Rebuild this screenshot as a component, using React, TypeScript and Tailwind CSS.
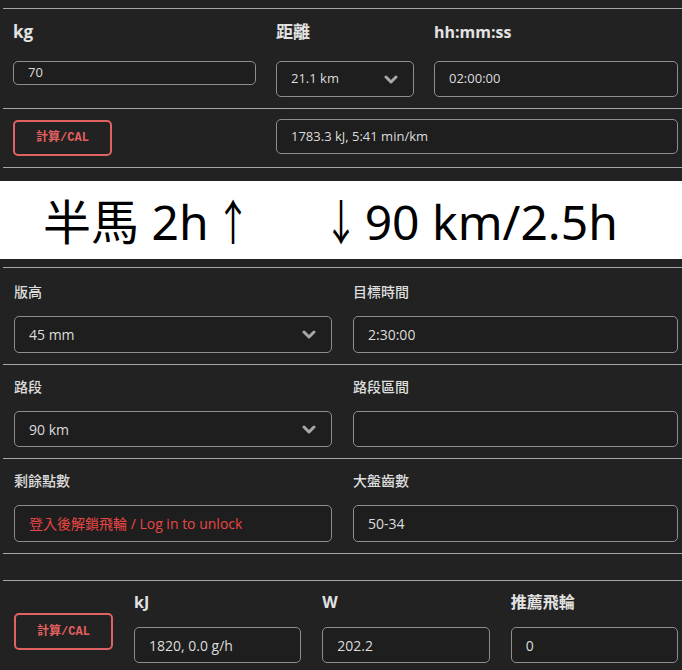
import React from "react"

const sans = "font-['Open_Sans','Noto_Sans_CJK_TC',sans-serif]"

function Chevron() {
  return (
    <svg width="14" height="9" viewBox="0 0 14 9" className="shrink-0">
      <path d="M2 2 L7 7 L12 2" fill="none" stroke="#a8a8a8" strokeWidth="3" strokeLinecap="round" strokeLinejoin="round" />
    </svg>
  )
}

function Box({ children, select, className = "h-9" }: { children?: React.ReactNode; select?: boolean; className?: string }) {
  return (
    <div
      className={`flex items-center justify-between rounded-[5px] border border-[#8e8e8e] bg-[#1e1e1e] pl-[14px] pr-[15px] text-[13px] text-[#dcdcdc] ${className}`}
    >
      <span className="truncate">{children}</span>
      {select && <Chevron />}
    </div>
  )
}

function CalButton({ className = "" }: { className?: string }) {
  return (
    <button
      className={`flex h-9 w-[99px] items-center justify-center rounded-[5px] border-2 border-[#e06262] font-['Liberation_Mono','Noto_Sans_CJK_TC',monospace] text-[12px] font-bold text-[#e36060] ${className}`}
    >
      計算/CAL
    </button>
  )
}

function Field({ label, children }: { label: string; children: React.ReactNode }) {
  return (
    <div className="flex flex-col">
      <div className="h-5 text-[14px] leading-5 font-medium text-[#dedede]">{label}</div>
      <div className="mt-[14px]">{children}</div>
    </div>
  )
}

export default function App() {
  return (
    <div className={`h-[670px] w-[682px] overflow-hidden bg-[#222222] ${sans}`}>
      {/* top calculator */}
      <div className="pt-2">
        <div className="ml-[3px] h-[101px] border-y border-[#a6a6a6] pl-[10px] pr-1 pt-[11px]">
          <div className="grid grid-cols-[243px_138px_1fr] gap-x-[20px]">
            <div className="h-6 text-[17px] leading-6 font-bold text-[#e2e2e2]">kg</div>
            <div className="h-6 text-[17px] leading-6 font-bold text-[#e2e2e2]">距離</div>
            <div className="h-6 text-[16px] leading-6 font-bold text-[#e2e2e2]">hh:mm:ss</div>
            <div className="mt-[17px]">
              <Box className="h-6">70</Box>
            </div>
            <div className="mt-[17px]">
              <Box select>21.1 km</Box>
            </div>
            <div className="mt-[17px]">
              <Box>02:00:00</Box>
            </div>
          </div>
        </div>
        <div className="ml-[3px] flex h-[59px] gap-x-[164px] border-b border-[#a6a6a6] pl-[10px] pr-1 pt-[11px]">
          <CalButton />
          <div className="flex-1 -mt-px">
            <Box className="h-[35px]">1783.3 kJ, 5:41 min/km</Box>
          </div>
        </div>
      </div>

      <div className="mt-[13px] flex h-[78px] items-center bg-white pl-[43px] font-['Noto_Sans','Noto_Sans_CJK_TC',sans-serif] text-[48px] leading-none font-normal text-black">
        <span>
          半馬 2h<span className="inline-block scale-x-[0.72] font-['Noto_Sans_CJK_TC',sans-serif]">↑</span>
        </span>
        <span className="ml-[60px]">
          <span className="inline-block scale-x-[0.72] font-['Noto_Sans_CJK_TC',sans-serif]">↓</span>90 km/2.5h
        </span>
      </div>

      {/* gear section */}
      <div className="mt-2 ml-[3px] border-t border-[#a6a6a6]">
        <div className="grid h-[97px] grid-cols-[318px_1fr] gap-x-[21px] border-b border-[#a6a6a6] pl-[11px] pr-1 pt-[14px]">
          <Field label="版高">
            <Box select className="h-[37px] text-[14px]">45 mm</Box>
          </Field>
          <Field label="目標時間">
            <Box className="h-[37px] text-[14px]">2:30:00</Box>
          </Field>
        </div>
        <div className="grid h-[94px] grid-cols-[318px_1fr] gap-x-[21px] border-b border-[#a6a6a6] pl-[11px] pr-1 pt-[12px]">
          <Field label="路段">
            <Box select className="h-9 text-[14px]">90 km</Box>
          </Field>
          <Field label="路段區間">
            <Box className="h-9" />
          </Field>
        </div>
        <div className="grid h-[95px] grid-cols-[318px_1fr] gap-x-[21px] border-b border-[#a6a6a6] pl-[11px] pr-1 pt-[12px]">
          <Field label="剩餘點數">
            <Box className="h-[37px] text-[14px] text-[#e84545]">登入後解鎖飛輪 / Log in to unlock</Box>
          </Field>
          <Field label="大盤齒數">
            <Box className="h-[37px] text-[14px]">50-34</Box>
          </Field>
        </div>
        <div className="h-[27px] border-b border-[#a6a6a6]" />
        <div className="flex gap-x-[21px] pl-[11px] pr-1 pt-[9px]">
          <CalButton className="mt-[23px] h-[37px]" />
          <div className="grid flex-1 grid-cols-3 gap-x-[21px]">
            <div className="flex flex-col">
              <div className="h-6 text-[16px] leading-6 font-bold text-[#e2e2e2]">kJ</div>
              <div className="mt-[13px]">
                <Box className="h-9 text-[14px]">1820, 0.0 g/h</Box>
              </div>
            </div>
            <div className="flex flex-col">
              <div className="h-6 text-[16px] leading-6 font-bold text-[#e2e2e2]">W</div>
              <div className="mt-[13px]">
                <Box className="h-9 text-[14px]">202.2</Box>
              </div>
            </div>
            <div className="flex flex-col">
              <div className="h-6 text-[16px] leading-6 font-bold text-[#e2e2e2]">推薦飛輪</div>
              <div className="mt-[13px]">
                <Box className="h-9 text-[14px]">0</Box>
              </div>
            </div>
          </div>
        </div>
      </div>
    </div>
  )
}
